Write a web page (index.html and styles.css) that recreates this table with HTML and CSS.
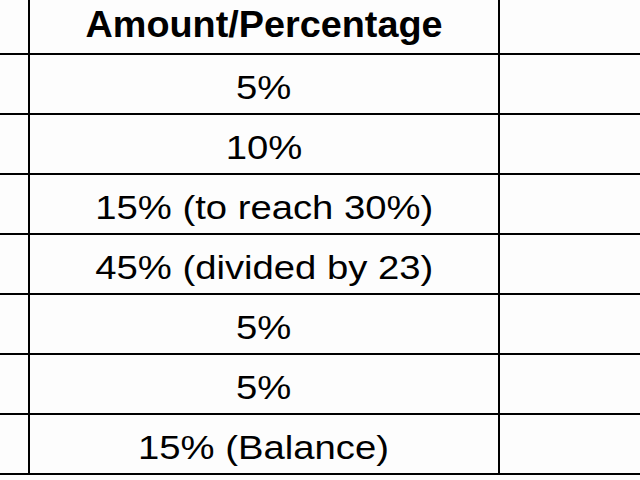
FILE: index.html
```html
<!DOCTYPE html>
<html>
<head>
<meta charset="utf-8">
<link rel="stylesheet" href="styles.css">
</head>
<body>
<div class="sheet">
  <div class="row head"><div class="cell"></div><div class="cell mid"><span class="txt">Amount/Percentage</span></div><div class="cell"></div></div>
  <div class="row"><div class="cell"></div><div class="cell mid"><span class="txt">5%</span></div><div class="cell"></div></div>
  <div class="row"><div class="cell"></div><div class="cell mid"><span class="txt">10%</span></div><div class="cell"></div></div>
  <div class="row"><div class="cell"></div><div class="cell mid"><span class="txt">15% (to reach 30%)</span></div><div class="cell"></div></div>
  <div class="row"><div class="cell"></div><div class="cell mid"><span class="txt">45% (divided by 23)</span></div><div class="cell"></div></div>
  <div class="row"><div class="cell"></div><div class="cell mid"><span class="txt">5%</span></div><div class="cell"></div></div>
  <div class="row"><div class="cell"></div><div class="cell mid"><span class="txt">5%</span></div><div class="cell"></div></div>
  <div class="row"><div class="cell"></div><div class="cell mid"><span class="txt">15% (Balance)</span></div><div class="cell"></div></div>
</div>
</body>
</html>
```

FILE: styles.css
```css
html, body {
  margin: 0;
  padding: 0;
  background: #fdfdfd;
}
.sheet {
  display: flex;
  flex-direction: column;
  font-family: "Liberation Sans", Arial, sans-serif;
  color: #000;
}
.row {
  display: grid;
  grid-template-columns: 28px 472px 1fr;
  height: 60px;
  border-bottom: 2px solid #000;
  box-sizing: border-box;
}
.row.head {
  height: 55px;
}
.cell {
  display: flex;
  align-items: center;
  justify-content: center;
}
.mid {
  border-left: 2px solid #000;
  border-right: 2px solid #000;
  font-size: 34px;
  padding-top: 7px;
}
.txt {
  display: inline-block;
  transform: scaleX(1.125);
}
.head .mid {
  font-weight: bold;
  font-size: 36px;
  padding-top: 0;
  padding-bottom: 4px;
}
.head .txt {
  transform: scaleX(1.05);
}
```
